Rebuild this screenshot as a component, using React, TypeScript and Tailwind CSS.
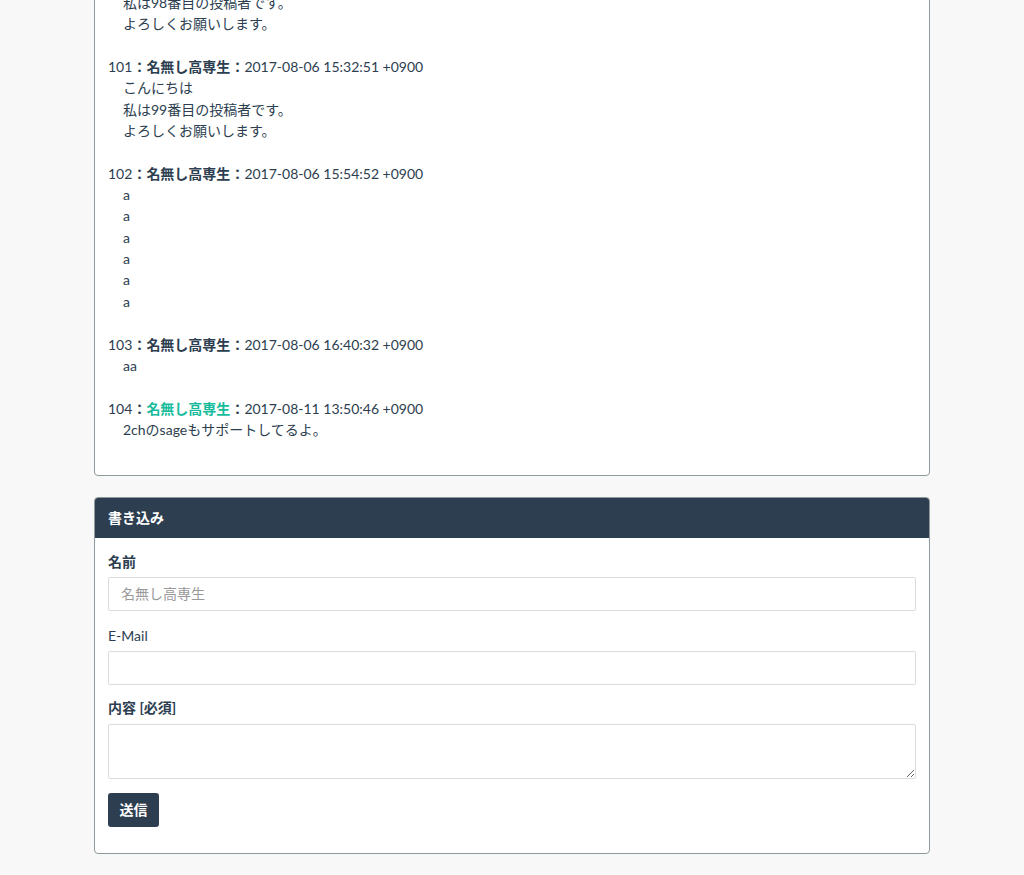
import React from "react";

const posts = [
  { no: 101, name: "名無し高専生", date: "2017-08-06 15:32:51 +0900", lines: ["こんにちは", "私は99番目の投稿者です。", "よろしくお願いします。"] },
  { no: 102, name: "名無し高専生", date: "2017-08-06 15:54:52 +0900", lines: ["a", "a", "a", "a", "a", "a"] },
  { no: 103, name: "名無し高専生", date: "2017-08-06 16:40:32 +0900", lines: ["aa"] },
  { no: 104, name: "名無し高専生", date: "2017-08-11 13:50:46 +0900", lines: ["2chのsageもサポートしてるよ。"], sage: true },
];

export default function App() {
  return (
    <div
      className="min-h-[875px] bg-[#f8f8f8] text-[14px] leading-[21.35px] text-[#2c3e50] overflow-hidden"
      style={{ fontFamily: 'Lato, "Noto Sans CJK JP", sans-serif' }}
    >
      <div className="mx-[94px] -mt-[24px]">
        {/* Thread (scrolled: the first lines belong to post 100) */}
        <div className="bg-white border border-[#8e9a9d] rounded-[4px] px-[13px] pt-[15px] pb-[35px] mb-[21px]">
          <div className="pl-[15px]">
            <div>私は98番目の投稿者です。</div>
            <div>よろしくお願いします。</div>
          </div>
          {posts.map((p) => (
            <div key={p.no} className="mt-[21.35px]">
              <div>
                {p.no}
                <b>：</b>
                <b className={p.sage ? "text-[#18bc9c]" : ""}>{p.name}</b>
                <b>：</b>
                {p.date}
              </div>
              <div className="pl-[15px]">
                {p.lines.map((l, i) => (
                  <div key={i}>{l}</div>
                ))}
              </div>
            </div>
          ))}
        </div>

        {/* Post form */}
        <div className="bg-white border border-[#8e9a9d] rounded-[4px] overflow-hidden">
          <div className="bg-[#2c3e50] text-white font-bold px-[13px] py-[9px]">書き込み</div>
          <div className="px-[13px] pt-[13px] pb-[26px]">
            <div className="mb-[14px]">
              <label className="block font-bold mb-[5px]">名前</label>
              <input
                className="block w-full h-[34px] border border-[#dcdcdc] rounded-[2px] px-[12px] outline-none placeholder:text-[#999]"
                placeholder="名無し高専生"
              />
            </div>
            <div className="mb-[12px]">
              <label className="block mb-[5px]">E-Mail</label>
              <input className="block w-full h-[34px] border border-[#dcdcdc] rounded-[2px] px-[12px] outline-none" />
            </div>
            <div className="mb-[14px]">
              <label className="block font-bold mb-[5px]">内容 [必須]</label>
              <textarea className="block w-full h-[55px] border border-[#dcdcdc] rounded-[2px] px-[12px] py-[6px] outline-none" />
            </div>
            <button className="bg-[#2c3e50] text-white font-bold rounded-[3px] w-[51px] h-[34px]">送信</button>
          </div>
        </div>
      </div>
    </div>
  );
}
